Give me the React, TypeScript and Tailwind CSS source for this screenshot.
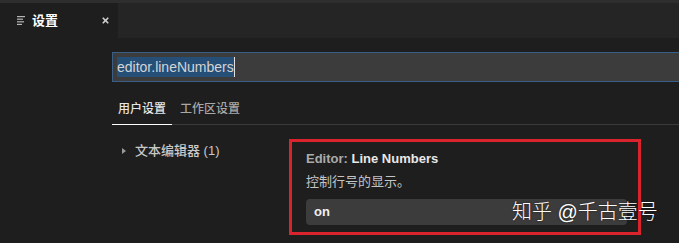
import { X } from "lucide-react";

const font = { fontFamily: '"Liberation Sans", "Noto Sans CJK SC", sans-serif' };

export default function App() {
  return (
    <div style={font} className="relative h-[243px] w-[679px] overflow-hidden bg-[#1e1e1e] text-[#cccccc]">
      <div className="h-[3px] bg-[#2e2e2e]" />

      {/* tab bar */}
      <div className="flex h-[35px] bg-[#252526]">
        <div className="flex w-[118px] items-center bg-[#1e1e1e] pl-[17px]">
          <svg width="9" height="9" viewBox="0 0 9 9" className="mr-[6px]">
            <rect x="0" y="0" width="8" height="1.2" fill="#b5b5b5" />
            <rect x="0" y="2.6" width="6" height="1.2" fill="#b5b5b5" />
            <rect x="0" y="5.2" width="7" height="1.2" fill="#b5b5b5" />
            <rect x="0" y="7.8" width="5" height="1.2" fill="#b5b5b5" />
          </svg>
          <span className="text-[13px] font-bold leading-[20px] text-white">设置</span>
          <X className="ml-auto mr-[8px] h-[9px] w-[9px] text-[#d0d0d0]" strokeWidth={4.5} />
        </div>
      </div>

      <div className="pl-[112px]">
        {/* search */}
        <div className="mt-[14px] flex h-[30px] w-[700px] items-center border border-[#3a5f87] bg-[#3c3c3c] pl-[4px]">
          <span className="bg-[#264f78] text-[14px] leading-[20px] text-[#d4d4d4]">editor.lineNumbers</span>
          <span className="h-[20px] w-px bg-[#e0e0e0]" />
        </div>

        {/* scope tabs */}
        <div className="mt-[14px] flex gap-[2px] border-b border-[#3a3a3a]">
          <div className="-mb-px border-b border-white px-[6px] pt-[3px] pb-[5px] text-[12px] font-medium leading-[20px] text-[#e6e6e6]">
            用户设置
          </div>
          <div className="px-[6px] pt-[3px] pb-[5px] text-[12px] font-medium leading-[20px] text-[#a8a8a8]">
            工作区设置
          </div>
        </div>

        <div className="mt-[14px] flex">
          {/* tree */}
          <div className="w-[177px] pt-[2px]">
            <div className="flex items-center pl-[10px] text-[13px] leading-[20px] text-[#c8c8c8]">
              <svg width="4" height="6" viewBox="0 0 4 6" className="mr-[9px]">
                <path d="M0 0 L4 3 L0 6 Z" fill="#9a9a9a" />
              </svg>
              <span className="font-medium">文本编辑器 (1)</span>
            </div>
          </div>

          {/* highlighted setting */}
          <div className="h-[96px] w-[352px] border-[3px] border-[#d9232d] pt-[8px] pl-[14px]">
            <div className="text-[13px] font-bold leading-[18px]">
              <span className="text-[#ababab]">Editor: </span>
              <span className="text-[#e8e8e8]">Line Numbers</span>
            </div>
            <div className="mt-[5px] text-[13px] leading-[18px] text-[#c4c4c4]">控制行号的显示。</div>
            <div className="mt-[8px] flex h-[26px] w-[321px] items-center rounded-[4px] bg-[#3c3c3c] pl-[8px] text-[13px] font-bold text-[#f0f0f0]">
              on
            </div>
          </div>
        </div>
      </div>

      {/* watermark */}
      <div className="absolute top-[199px] left-[512px] text-[20px] font-light leading-[26px] text-white [text-shadow:0_0_2px_rgba(0,0,0,0.6)]">
        知乎 @千古壹号
      </div>
    </div>
  );
}
